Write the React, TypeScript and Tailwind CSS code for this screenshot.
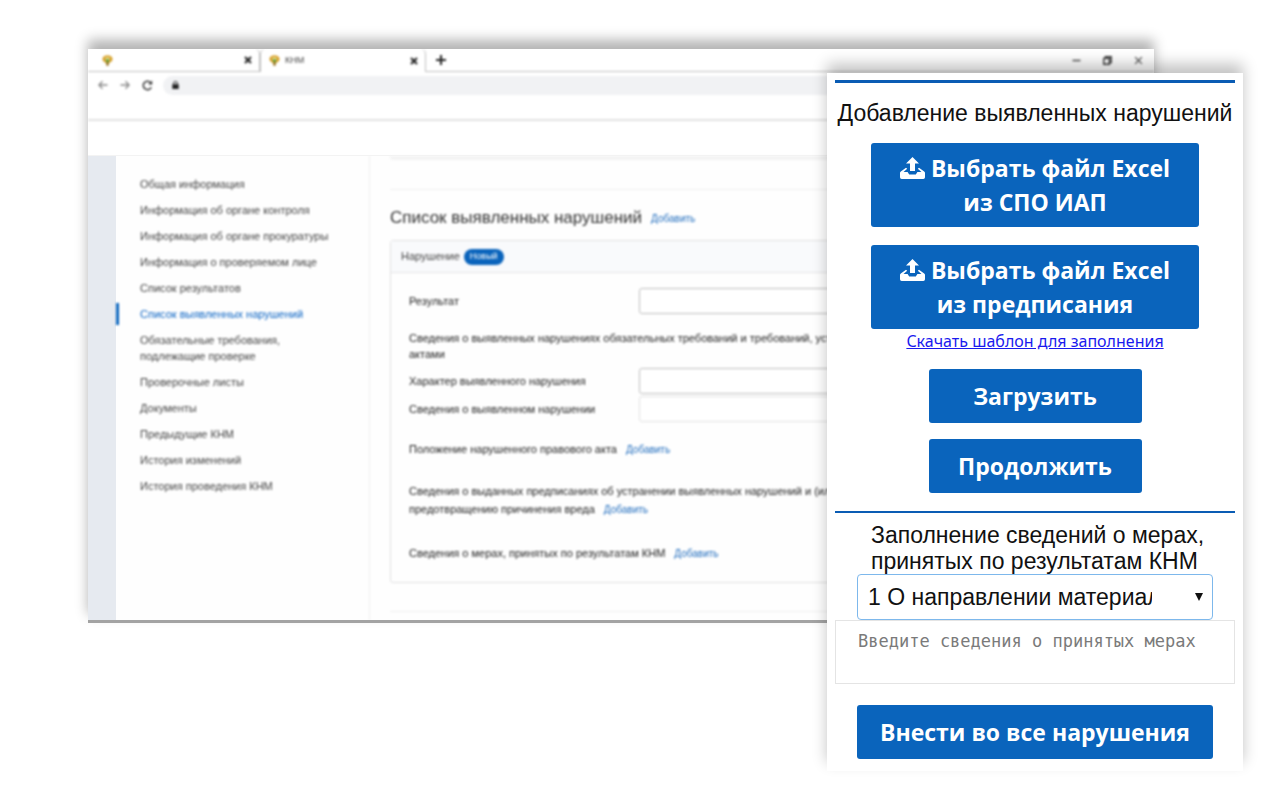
import type { ReactNode } from "react";

const navItems = [
  "Общая информация",
  "Информация об органе контроля",
  "Информация об органе прокуратуры",
  "Информация о проверяемом лице",
  "Список результатов",
  "Список выявленных нарушений",
  "Обязательные требования, подлежащие проверке",
  "Проверочные листы",
  "Документы",
  "Предыдущие КНМ",
  "История изменений",
  "История проведения КНМ",
];
const activeItem = "Список выявленных нарушений";

function Emblem() {
  return (
    <svg viewBox="0 0 11 11" className="size-[11px] shrink-0" aria-hidden="true">
      <path d="M.5 3.200 2 1.200 4 .4h3l2 .8 1.500 2-.3 2.300-1.700 1.700L6.700 8 6.400 10.600H4.600L4.300 8 2.500 7.200.8 5.500Z" fill="#d49a1c" />
      <path d="M3 2.500h5L7.500 5.500 5.500 7 3.500 5.500Z" fill="#f1e7a0" />
      <path d="M3.700 4.300h3.600L6.500 7.500h-2Z" fill="#5d9a3a" />
      <path d="M4.600 7.600h1.800v3H4.600Z" fill="#7d5a18" />
    </svg>
  );
}

function CloseIcon({ className }: { className: string }) {
  return (
    <svg viewBox="0 0 8 8" className={className} fill="none" stroke="currentColor" aria-hidden="true">
      <path d="m1 1 6 6M7 1 1 7" />
    </svg>
  );
}

function UploadIcon() {
  return (
    <svg viewBox="0 0 25 22" className="h-[22px] w-[25px] shrink-0" fill="currentColor" aria-hidden="true">
      <path d="M12.500 0 19 6.500h-4v7.500h-5V6.500H6Z" />
      <path d="M0 15.800Q0 15 .8 14.400L6 10.800l1.200.9-3.700 3.300H7.600l1.600 2.600h6.600l1.600-2.600h4.100l-3.700-3.300 1.200-.9 5.200 3.600q.8.600.8 1.400v4.500Q25 22 23.300 22H1.700Q0 22 0 20.300Z" />
    </svg>
  );
}

function AddLink() {
  return (
    <a href="#add" className="ml-[9px] text-[10px] text-[#1f6cbe]">
      Добавить
    </a>
  );
}

function Field({ id, label, light }: { id: string; label: string; light?: boolean }) {
  return (
    <div className="flex items-center">
      <label htmlFor={id} className="w-[230px] shrink-0">
        {label}
      </label>
      <input
        id={id}
        className={`h-[26px] min-w-0 flex-1 rounded-[3px] border bg-white px-2 ${light ? "border-[#e0e0e0]" : "border-[#bdbdbd]"}`}
      />
    </div>
  );
}

function Tab({ children, label, active }: { children?: ReactNode; label: string; active?: boolean }) {
  return (
    <div
      className={`flex h-[23px] w-[166px] items-center rounded-t-[5px] border-r border-[#c0c0c0] pl-2 pr-[7px] ${
        active ? "border-l bg-white" : "border-b"
      }`}
    >
      <Emblem />
      <span className="ml-[5px] flex-1 text-[9px] text-[#444]">{children}</span>
      <button type="button" aria-label={label} className="text-[#222]">
        <CloseIcon className="size-[8px] stroke-2" />
      </button>
    </div>
  );
}

function BrowserBars() {
  return (
    <header className="blur-[1px]">
      <div className="flex items-start">
        <div className="h-[23px] w-[6px] border-b border-[#c0c0c0]" />
        <Tab label="Закрыть первую вкладку" />
        <Tab label="Закрыть вкладку КНМ" active>
          КНМ
        </Tab>
        <div className="flex h-[23px] flex-1 items-center border-b border-[#c0c0c0] pl-[10px] pr-[11px]">
          <button type="button" aria-label="Новая вкладка" className="text-[#222]">
            <svg viewBox="0 0 10 10" className="size-[10px]" fill="none" stroke="currentColor" strokeWidth="2">
              <path d="M5 0v10M0 5h10" />
            </svg>
          </button>
          <div className="ml-auto flex items-center gap-[22px] text-[#444]">
            <button type="button" aria-label="Свернуть">
              <svg viewBox="0 0 9 9" className="size-[9px]" fill="none" stroke="currentColor" strokeWidth="1.400">
                <path d="M.5 4.500h8" />
              </svg>
            </button>
            <button type="button" aria-label="Развернуть">
              <svg viewBox="0 0 9 9" className="size-[9px]" fill="none" stroke="#333" strokeWidth="1.400">
                <path d="M.8 2.400h5.600v5.800H.8ZM2.400 2.400V.8h5.800v5.800H6.400" />
              </svg>
            </button>
            <button type="button" aria-label="Закрыть окно">
              <CloseIcon className="size-[9px]" />
            </button>
          </div>
        </div>
      </div>

      <div className="flex h-[26px] items-center pl-[10px] text-[#888]">
        <button type="button" aria-label="Назад">
          <svg viewBox="0 0 10 10" className="size-[10px]" fill="none" stroke="currentColor" strokeWidth="1.300">
            <path d="M9.500 5H1M4.500 1.200.8 5l3.700 3.800" />
          </svg>
        </button>
        <button type="button" aria-label="Вперёд" className="ml-3">
          <svg viewBox="0 0 10 10" className="size-[10px]" fill="none" stroke="currentColor" strokeWidth="1.300">
            <path d="M.5 5H9M5.500 1.200 9.200 5 5.500 8.800" />
          </svg>
        </button>
        <button type="button" aria-label="Обновить" className="ml-3 text-[#333]">
          <svg viewBox="0 0 11 11" className="size-[11px]" fill="none" stroke="currentColor" strokeWidth="1.500">
            <path d="M9.300 7.200A4.200 4.200 0 1 1 8.600 2.600" />
            <path d="M10.200.6v4H6.200Z" fill="currentColor" stroke="none" />
          </svg>
        </button>
        <div className="ml-[10px] flex h-[19px] flex-1 items-center rounded-l-full bg-[#f1f2f4] pl-[9px]">
          <svg viewBox="0 0 7 8" className="h-2 w-[7px] text-[#222]" aria-hidden="true">
            <path d="M.3 3.200h6.400V8H.3Z" fill="currentColor" />
            <path d="M1.800 3.500V2a1.700 1.700 0 0 1 3.400 0v1.500" fill="none" stroke="currentColor" />
          </svg>
        </div>
      </div>
      <div className="h-[23px] border-b-2 border-[#e2e2e2]" />
    </header>
  );
}

function BrowserWindow() {
  return (
    <section className="overflow-hidden border-b-[3px] border-[#a3a3a3] bg-white shadow-[0_-9px_12px_rgba(0,0,0,0.3)]">
      <BrowserBars />
      <div className="h-[35px] border-b border-[#f3f3f3]" />
      <div className="flex bg-[#fefefe] text-[11px]">
        <div className="w-7 shrink-0 bg-[#e6eaf0]" />
        <nav className="w-[254px] shrink-0 border-r border-[#f0f0f0] pt-[15px] text-[#444] blur-[1px]">
          {navItems.map((item) => (
            <a
              key={item}
              href="#section"
              className={`flex py-[5px] leading-4 ${item === activeItem ? "text-[#0a64c4]" : ""}`}
            >
              <span className={`-my-[3px] w-[3px] ${item === activeItem ? "bg-[#0a64bc]" : ""}`} />
              <span className="ml-[21px] w-[200px]">{item}</span>
            </a>
          ))}
        </nav>
        <div className="min-w-0 flex-1 pb-2 pl-5 pr-4 text-[#222] blur-[1px]">
          <div className="h-1 rounded-b-[3px] bg-[#f3f3f3]" />
          <div className="h-[30px] border-b border-[#f0f0f0]" />
          <h1 className="flex h-[50px] items-center whitespace-nowrap pt-[6px] text-[17px] text-[#333]">
            Список выявленных нарушений
            <AddLink />
          </h1>
          <div className="rounded-[3px] border border-[#e0e0e2]">
            <div className="flex h-8 items-center border-b border-[#e4e4e6] bg-[#f9fafc] pl-[10px] text-[#444]">
              Нарушение
              <span className="ml-1 flex h-4 items-center rounded-full bg-[#0a64bc] px-[6px] text-[9px] text-white">
                Новый
              </span>
            </div>
            <div className="overflow-hidden pb-5 pl-[18px] pr-4 pt-[15px] leading-4">
              <Field id="result" label="Результат" />
              <p className="whitespace-nowrap pb-[6px] pt-4">
                Сведения о выявленных нарушениях обязательных требований и требований, установленных
                <br />
                актами
              </p>
              <Field id="kind" label="Характер выявленного нарушения" />
              <div className="pt-[2px]">
                <Field id="details" label="Сведения о выявленном нарушении" light />
              </div>
              <p className="pt-[19px]">
                Положение нарушенного правового акта
                <AddLink />
              </p>
              <p className="whitespace-nowrap pt-6 leading-[18px]">
                Сведения о выданных предписаниях об устранении выявленных нарушений и (или)
                <br />
                предотвращению причинения вреда
                <AddLink />
              </p>
              <p className="pt-[26px]">
                Сведения о мерах, принятых по результатам КНМ
                <AddLink />
              </p>
            </div>
          </div>
          <div className="h-[29px] border-b border-[#f0f0f0]" />
        </div>
      </div>
    </section>
  );
}

const primaryButton =
  "rounded-[3px] bg-[#0a64bc] text-center font-['Open_Sans','Noto_Sans',sans-serif] text-[23px] font-bold leading-[34px] text-white";

function FileButton({ source }: { source: string }) {
  return (
    <button type="button" className={`${primaryButton} mx-9 py-2`}>
      <span className="flex items-center justify-center gap-[6px]">
        <UploadIcon />
        Выбрать файл Excel
      </span>
      {source}
    </button>
  );
}

function ActionPanel() {
  return (
    <aside className="absolute right-[37px] top-[73px] flex w-[416px] flex-col bg-white px-2 pb-3 pt-[7px] text-[23px] text-[#111] shadow-[0_-9px_14px_rgba(0,0,0,0.24)]">
      <h2 className="whitespace-nowrap border-t-[3px] border-[#0a5cb4] pb-4 pt-4 text-center leading-7">
        Добавление выявленных нарушений
      </h2>
      <FileButton source="из СПО ИАП" />
      <div className="h-[18px]" />
      <FileButton source="из предписания" />
      <a
        href="#template"
        className="self-center font-['Noto_Sans','Open_Sans',sans-serif] text-[16px] leading-6 text-[#1a1aee] underline"
      >
        Скачать шаблон для заполнения
      </a>
      <div className="mt-4 flex flex-col items-center gap-4 pb-[18px]">
        <button type="button" className={`${primaryButton} w-[213px] py-[10px]`}>
          Загрузить
        </button>
        <button type="button" className={`${primaryButton} w-[213px] py-[10px]`}>
          Продолжить
        </button>
      </div>
      <label htmlFor="measure" className="whitespace-nowrap border-t-2 border-[#0a5cb4] pl-9 pt-[9px] leading-[26px]">
        Заполнение сведений о мерах,
        <br />
        принятых по результатам КНМ
      </label>
      <div className="relative mx-[22px]">
        <select
          id="measure"
          className="h-[46px] w-full appearance-none rounded-[4px] border border-[#7db8ec] bg-white pl-[10px] pr-[60px]"
        >
          <option>1 О направлении материалов</option>
        </select>
        <svg viewBox="0 0 8 8" className="pointer-events-none absolute right-[10px] top-[19px] size-2" aria-hidden="true">
          <path d="M0 0h8L4 8Z" fill="#111" />
        </svg>
      </div>
      <textarea
        aria-label="Сведения о принятых мерах"
        placeholder="Введите сведения о принятых мерах"
        className="h-16 resize-none overflow-hidden border border-[#e4e4e4] bg-white px-[22px] py-2 font-['DejaVu_Sans_Mono',monospace] text-[17px] leading-6 placeholder:text-[#7a7a7a]"
      />
      <button type="button" className={`${primaryButton} mx-[22px] mt-[21px] py-[10px]`}>
        Внести во все нарушения
      </button>
    </aside>
  );
}

export default function App() {
  return (
    <main className="relative min-h-screen bg-white pb-7 pl-[88px] pr-[126px] pt-[49px] font-['Liberation_Sans',Arial,sans-serif]">
      <BrowserWindow />
      <ActionPanel />
    </main>
  );
}
